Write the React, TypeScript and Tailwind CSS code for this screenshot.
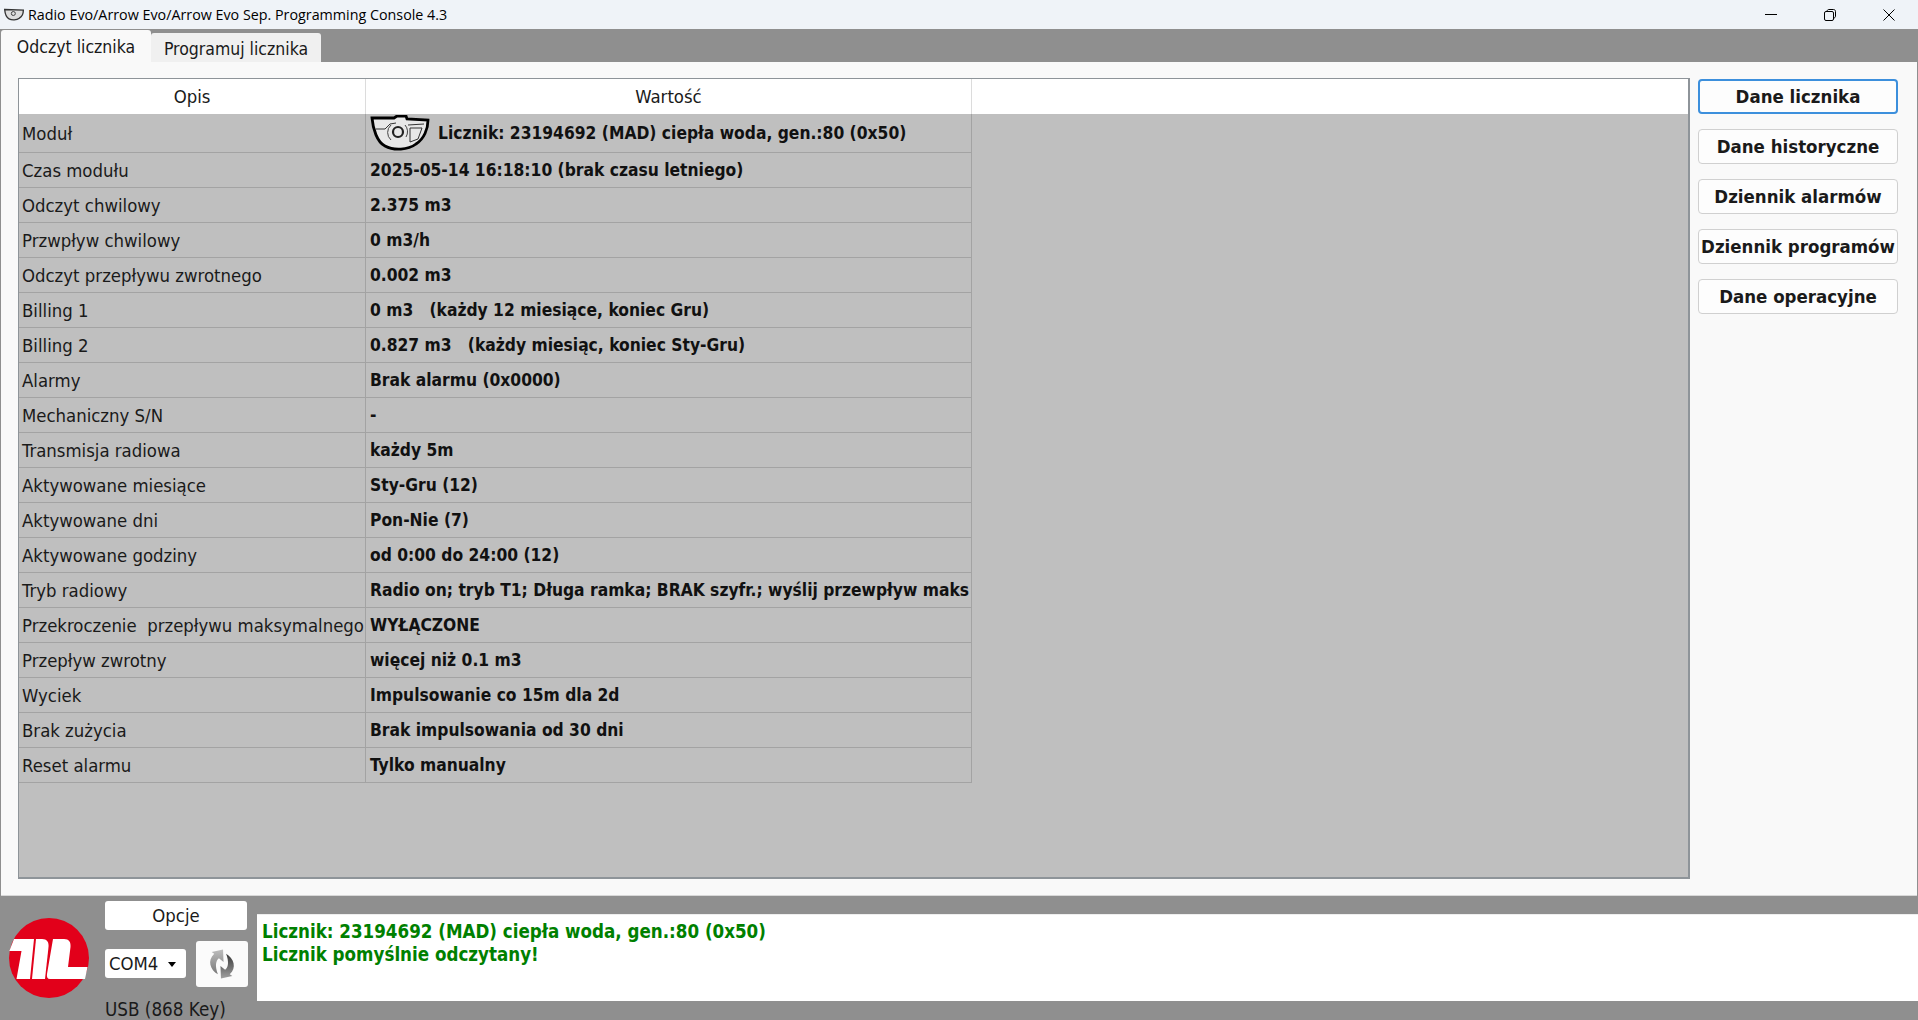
const rows: [string, string][] = [
  ["Czas modułu", "2025-05-14 16:18:10 (brak czasu letniego)"],
  ["Odczyt chwilowy", "2.375 m3"],
  ["Przwpływ chwilowy", "0 m3/h"],
  ["Odczyt przepływu zwrotnego", "0.002 m3"],
  ["Billing 1", "0 m3   (każdy 12 miesiące, koniec Gru)"],
  ["Billing 2", "0.827 m3   (każdy miesiąc, koniec Sty-Gru)"],
  ["Alarmy", "Brak alarmu (0x0000)"],
  ["Mechaniczny S/N", "-"],
  ["Transmisja radiowa", "każdy 5m"],
  ["Aktywowane miesiące", "Sty-Gru (12)"],
  ["Aktywowane dni", "Pon-Nie (7)"],
  ["Aktywowane godziny", "od 0:00 do 24:00 (12)"],
  ["Tryb radiowy", "Radio on; tryb T1; Długa ramka; BRAK szyfr.; wyślij przewpływ maks"],
  ["Przekroczenie  przepływu maksymalnego", "WYŁĄCZONE"],
  ["Przepływ zwrotny", "więcej niż 0.1 m3"],
  ["Wyciek", "Impulsowanie co 15m dla 2d"],
  ["Brak zużycia", "Brak impulsowania od 30 dni"],
  ["Reset alarmu", "Tylko manualny"],
];

const sideButtons = ["Dane historyczne", "Dziennik alarmów", "Dziennik programów", "Dane operacyjne"];

function MeterIcon({ className }: { className: string }) {
  return (
    <svg viewBox="0 0 60 36" className={className} fill="none">
      <path
        d="M2 3 L24 3 L27 1 L36 1 L37 4 L58 5 C58 14 54 24 46 29 C38 35 24 36 15 31 C7 27 3 14 2 3 Z"
        fill="#e8e8e8"
        stroke="#000"
        strokeWidth="2.8"
      />
      <path d="M6 14 L15 14 L20 9 L26 8 M38 10 L54 9 M40 13 L40 27 L48 24 L52 13 Z" stroke="#333" strokeWidth="1" />
      <circle cx="28" cy="17" r="5" stroke="#222" strokeWidth="2.2" />
      <path d="M21 10 A 10 10 0 0 0 21 25 M35 10 A 10 10 0 0 1 36 22" stroke="#444" strokeWidth="1" />
    </svg>
  );
}

function Logo() {
  return (
    <svg viewBox="0 0 80 80" className="w-20 h-20 shrink-0">
      <circle cx="40" cy="40" r="40" fill="#e2001a" />
      <path d="M5 21 L25 21 L21 61 L7.5 61 L12.5 33 L0.3 33 Z" fill="#fff" />
      <path d="M27 21 L33 21 C38 21 40 24 39.5 29 L36 61 L23 61 Z" fill="#fff" />
      <path d="M44 21 L55 21 C60 21 62 24 61.5 29 L59 49 L78.5 49 L76 61 L41 61 C38.5 61 37.5 59 38 56 Z" fill="#fff" />
    </svg>
  );
}

function RefreshIcon() {
  const arrow = "M15.5 0.5 L16 12.5 L11.5 9 C8.5 11.5 7.5 16 10.5 24.5 C3 20 0 11 7 4.5 L4.5 3 Z";
  return (
    <svg viewBox="0 0 29 29" className="w-[30px] h-[30px]">
      <defs>
        <linearGradient id="rfA" x1="0" y1="0" x2="0" y2="1">
          <stop offset="0" stopColor="#bdbdbd" />
          <stop offset="1" stopColor="#787878" />
        </linearGradient>
        <linearGradient id="rfB" x1="0" y1="1" x2="0" y2="0">
          <stop offset="0" stopColor="#363636" />
          <stop offset="1" stopColor="#a0a0a0" />
        </linearGradient>
      </defs>
      <path d={arrow} fill="url(#rfA)" />
      <path d={arrow} fill="url(#rfB)" transform="rotate(180 14.5 14.5)" />
    </svg>
  );
}

export default function App() {
  return (
    <div className="w-[1918px] h-[1020px] flex flex-col overflow-hidden bg-[#8f8f8f] text-[18.4px] text-[#1a1a1a] font-['DejaVu_Sans',sans-serif] [font-stretch:condensed]">
      {/* pasek tytułu */}
      <div className="h-[29px] shrink-0 bg-[#eff3f8] flex items-center pl-1 text-[14.3px] text-black font-['Open_Sans',sans-serif] [font-stretch:normal]">
        <svg viewBox="0 0 60 36" className="w-[20px] h-[13px] mr-1" fill="none">
          <path d="M2 3 L58 5 C58 14 54 24 46 29 C38 35 24 36 15 31 C7 27 3 14 2 3 Z" fill="#ddd" stroke="#333" strokeWidth="4" />
          <circle cx="28" cy="15" r="6" stroke="#444" strokeWidth="3" />
        </svg>
        <span>Radio Evo/Arrow Evo/Arrow Evo Sep. Programming Console 4.3</span>
        <div className="ml-auto flex items-center">
          <div className="w-[59px] flex justify-center">
            <div className="w-3 h-px bg-black" />
          </div>
          <div className="w-[59px] flex justify-center">
            <svg viewBox="0 0 12 12" className="w-3 h-3" fill="none" stroke="#000">
              <rect x="0.5" y="2.5" width="9" height="9" rx="1.5" />
              <path d="M3 2.5 C3 1 4 0.5 5 0.5 L9.5 0.5 C10.7 0.5 11.5 1.3 11.5 2.5 L11.5 7 C11.5 8 11 9 9.5 9" />
            </svg>
          </div>
          <div className="w-[59px] flex justify-center">
            <svg viewBox="0 0 12 12" className="w-3 h-3" fill="none" stroke="#000">
              <path d="M0.5 0.5 L11.5 11.5 M11.5 0.5 L0.5 11.5" />
            </svg>
          </div>
        </div>
      </div>

      {/* zakładki */}
      <div className="h-[33px] shrink-0 flex items-end pl-px text-[17.5px]">
        <div className="w-[150px] h-[32px] pt-[3px] bg-[#f9f9f9] rounded-t-[3px] flex items-center justify-center">Odczyt licznika</div>
        <div className="w-[170px] h-[29px] pt-[3px] bg-[#f0f0f0] rounded-t-[3px] flex items-center justify-center">Programuj licznika</div>
      </div>

      {/* panel główny */}
      <div className="h-[834px] shrink-0 mx-px border-b border-[#d8d8d8] bg-[#f9f9f9] pt-4 pl-[17px] flex gap-2">
        <div className="w-[1672px] shrink-0 h-[801px] border border-[#8e9499] border-b-2 border-r-2 bg-[#bfbfbf]">
          <div className="h-[35px] bg-white flex text-center items-center">
            <div className="w-[347px] h-full border-r border-[#dcdcdc] flex items-center justify-center">Opis</div>
            <div className="w-[606px] h-full border-r border-[#dcdcdc] flex items-center justify-center">Wartość</div>
          </div>
          <div className="w-[953px] border-r border-[#a3a3a3]">
            <div className="h-[39px] flex border-b border-[#a3a3a3]">
              <div className="w-[347px] shrink-0 border-r border-[#a3a3a3] pl-[3px] pt-px flex items-center">Moduł</div>
              <div className="flex-1 flex items-center pl-1 font-bold text-[17.3px] text-[#111]">
                <MeterIcon className="w-[60px] h-[36px] shrink-0" />
                <span className="ml-2 pt-[2px]">Licznik: 23194692 (MAD) ciepła woda, gen.:80 (0x50)</span>
              </div>
            </div>
            {rows.map(([label, value]) => (
              <div key={label} className="h-[35px] flex border-b border-[#a3a3a3] whitespace-pre">
                <div className="w-[347px] shrink-0 border-r border-[#a3a3a3] pl-[3px] pt-px flex items-center">{label}</div>
                <div className="flex-1 flex items-center pl-1 pt-[2px] font-bold text-[17.3px] text-[#111]">{value}</div>
              </div>
            ))}
          </div>
        </div>

        <div className="w-[200px] shrink-0 pt-px flex flex-col gap-[15px] font-bold text-[18.5px]">
          <button className="h-[35px] pt-px bg-[#fdfdfd] border-2 border-[#3c8fdc] rounded-[4px]">Dane licznika</button>
          {sideButtons.map((label) => (
            <button key={label} className="h-[35px] pt-px bg-[#fdfdfd] border border-[#d0d0d0] rounded-[4px] whitespace-nowrap">
              {label}
            </button>
          ))}
        </div>
      </div>

      {/* dolny pasek */}
      <div className="flex-1 flex pl-[9px] pt-[5px] gap-[16px] min-h-0">
        <div className="pt-[17px]">
          <Logo />
        </div>
        <div className="w-[143px] shrink-0 flex flex-col">
          <button className="h-[29px] pt-px bg-white rounded-[3px] w-[142px]">Opcje</button>
          <div className="flex items-center gap-[10px] mt-[11px]">
            <div className="w-[81px] h-[29px] pt-px bg-white rounded-[3px] flex items-center pl-[4px]">
              COM4
              <span className="ml-[10px] w-0 h-0 border-x-[4px] border-x-transparent border-t-[5px] border-t-black" />
            </div>
            <div className="w-[52px] h-[46px] bg-[#fbfbfb] rounded-[3px] flex items-center justify-center">
              <RefreshIcon />
            </div>
          </div>
          <div className="mt-[10px] pt-px whitespace-nowrap leading-6 text-[18.7px]">USB (868 Key)</div>
        </div>
        <div className="flex-1 h-[87px] mt-[13px] ml-[-7px] bg-white pl-[5px] pt-[5px] font-bold text-[18.6px] text-[#008000] leading-[23px] border-t border-[#eeeeee]">
          <div>Licznik: 23194692 (MAD) ciepła woda, gen.:80 (0x50)</div>
          <div>Licznik pomyślnie odczytany!</div>
        </div>
      </div>
    </div>
  );
}
